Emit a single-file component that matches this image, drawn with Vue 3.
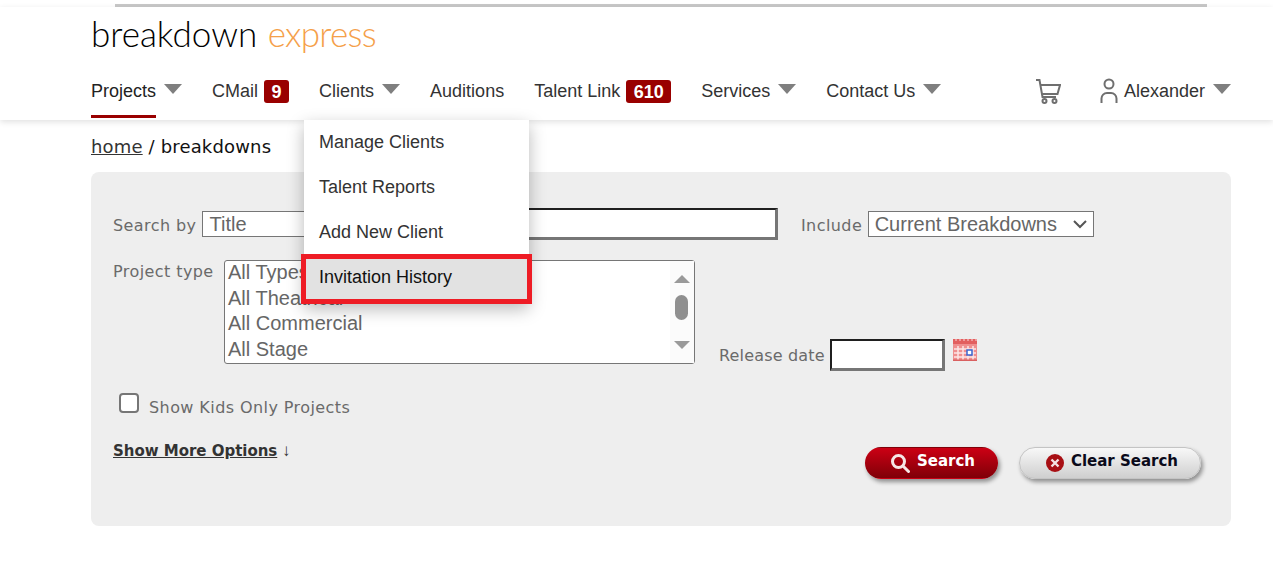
<script setup>
const navLeft = [
  { label: 'Projects', caret: true, active: true },
  { label: 'CMail', badge: '9' },
  { label: 'Clients', caret: true },
  { label: 'Auditions' },
  { label: 'Talent Link', badge: '610' },
  { label: 'Services', caret: true },
  { label: 'Contact Us', caret: true }
]
const menu = ['Manage Clients', 'Talent Reports', 'Add New Client', 'Invitation History']
const types = ['All Types', 'All Theatrical', 'All Commercial', 'All Stage']
</script>

<template>
  <div class="page">
    <div class="topline"></div>
    <header class="header">
      <div class="logo"><span class="logo-a">breakdown</span> <span class="logo-b">express</span></div>
      <nav class="nav">
        <div v-for="item in navLeft" :key="item.label" class="nav-item">
          <span class="nav-label" :class="{ active: item.active }">{{ item.label }}</span>
          <span v-if="item.badge" class="badge">{{ item.badge }}</span>
          <span v-if="item.caret" class="caret"></span>
          <ul v-if="item.label === 'Clients'" class="menu">
            <li v-for="m in menu" :key="m" class="menu-item" :class="{ hot: m === 'Invitation History' }">
              {{ m }}
              <span v-if="m === 'Invitation History'" class="callout"></span>
            </li>
          </ul>
        </div>
        <div class="nav-right">
          <svg class="cart" width="25" height="25" viewBox="0 0 25 25" fill="none" stroke="#6f6f6f" stroke-width="2">
            <path d="M0 1h3.500l3 17h13.500" />
            <path d="M4.500 6h19.500l-2.500 9H6" />
            <circle cx="8.500" cy="22" r="2" />
            <circle cx="18.500" cy="22" r="2" />
          </svg>
          <div class="user">
            <svg width="18" height="25" viewBox="0 0 18 25" fill="none" stroke="#6f6f6f" stroke-width="2">
              <circle cx="9" cy="6" r="4.500" />
              <path d="M1.500 25v-4.500a5.500 5.500 0 0 1 5.500-5.500h4a5.500 5.500 0 0 1 5.500 5.500v4.500" />
            </svg>
            <span class="nav-label">Alexander</span>
            <span class="caret"></span>
          </div>
        </div>
      </nav>
    </header>

    <div class="crumbs"><a class="crumb-link">home</a> / breakdowns</div>

    <section class="panel">
      <div class="row-search">
        <span class="label">Search by</span>
        <div class="select title-select">Title</div>
        <input class="text-input search-input" type="text" />
        <span class="label include">Include</span>
        <div class="select include-select">
          Current Breakdowns
          <svg class="chev" width="14" height="9" viewBox="0 0 14 9" fill="none" stroke="#555" stroke-width="2"><path d="M1 1l6 6 6-6" /></svg>
        </div>
      </div>

      <div class="row-type">
        <span class="label type-label">Project type</span>
        <div class="listbox">
          <div class="options">
            <div v-for="t in types" :key="t" class="option">{{ t }}</div>
          </div>
          <div class="scroll">
            <span class="arrow up"></span>
            <span class="thumb"></span>
            <span class="arrow down"></span>
          </div>
        </div>
        <div class="release">
          <span class="label release-label">Release date</span>
          <input class="text-input date-input" type="text" />
          <svg class="cal" width="24" height="22" viewBox="0 0 24 22">
            <rect x="0" y="0" width="24" height="22" fill="#ef8f8f" />
            <rect x="0" y="0" width="24" height="5" fill="#e25f5f" />
            <path d="M3 0v2M7 0v2M11 0v2M15 0v2M19 0v2M23 0v2" stroke="#fbd9d9" stroke-width="1" />
            <path d="M5 7v14M10 7v14M15 7v14M20 7v14M1 10h22M1 14h22M1 18h22" stroke="#fde6e6" stroke-width="1.500" />
            <rect x="0" y="20.500" width="24" height="1.500" fill="#d96060" />
            <rect x="14" y="11" width="5" height="5" fill="#fff" stroke="#3a66d0" stroke-width="1.500" />
          </svg>
        </div>
      </div>

      <label class="row-check">
        <span class="check"></span>
        <span class="label">Show Kids Only Projects</span>
      </label>

      <div class="row-actions">
        <div class="more"><a class="more-link">Show More Options</a> <span class="more-arrow">↓</span></div>
        <div class="buttons">
          <button class="btn btn-red">
            <svg width="20" height="20" viewBox="0 0 20 20" fill="none" stroke="#f6e6e6" stroke-width="3">
              <circle cx="8.500" cy="8.500" r="6" />
              <path d="M13 13l5.500 5.500" stroke-linecap="round" />
            </svg>
            Search
          </button>
          <button class="btn btn-light">
            <svg width="18" height="18" viewBox="0 0 18 18">
              <circle cx="9" cy="9" r="9" fill="#a80f14" />
              <path d="M5.500 5.500l7 7M12.500 5.500l-7 7" stroke="#f4e2e2" stroke-width="2.400" />
            </svg>
            Clear Search
          </button>
        </div>
      </div>
    </section>
  </div>
</template>

<style>
html, body { margin: 0; background: #fff; }
</style>

<style scoped>
.page {
  position: relative;
  height: 562px;
  overflow: hidden;
  background: #fff;
  font-family: "Liberation Sans", Arial, sans-serif;
}
.topline {
  height: 3px;
  margin: 4px 66px 0 115px;
  background: #c8c8c8;
}
.header {
  height: 113px;
  box-sizing: border-box;
  padding: 0 42px 0 91px;
  background: #fff;
  box-shadow: 0 2px 6px rgba(0, 0, 0, 0.12);
  position: relative;
  z-index: 2;
}
.logo {
  height: 60px;
  padding-top: 6px;
  box-sizing: border-box;
  font-family: Lato, sans-serif;
  font-weight: 300;
  font-size: 35px;
  line-height: 40px;
  white-space: nowrap;
}
.logo-a { color: #000; }
.logo-b { color: #f5a04a; margin-left: 1px; letter-spacing: -0.7px; }
.nav {
  display: flex;
  align-items: flex-start;
  gap: 30px;
  font-size: 18px;
  color: #333;
}
.nav-item {
  position: relative;
  display: flex;
  align-items: flex-start;
  height: 53px;
}
.nav-label {
  display: block;
  height: 48px;
  line-height: 49px;
  color: #333;
}
.nav-label.active {
  color: #222;
  border-bottom: 3px solid #900;
}
.caret {
  width: 0;
  height: 0;
  margin: 17px 0 0 8px;
  border-left: 9px solid transparent;
  border-right: 9px solid transparent;
  border-top: 10px solid #7f7f7f;
}
.badge {
  margin: 13px 0 0 6px;
  padding: 0 7.500px;
  height: 23px;
  line-height: 24px;
  background: #900;
  color: #fff;
  font-weight: 700;
  border-radius: 3px;
}
.menu {
  position: absolute;
  top: 53px;
  left: -15px;
  width: 225px;
  margin: 0;
  padding: 0 0 3px;
  list-style: none;
  background: #fff;
  box-shadow: 0 6px 16px rgba(0, 0, 0, 0.28);
}
.menu-item {
  position: relative;
  height: 45px;
  line-height: 44px;
  padding-left: 15px;
  color: #333;
}
.menu-item.hot {
  background: #e2e2e2;
  color: #111;
}
.callout {
  position: absolute;
  left: -3px;
  right: -3px;
  top: -1px;
  bottom: -4px;
  border: 5px solid #ee1c25;
}
.nav-right {
  margin-left: auto;
  display: flex;
  align-items: flex-start;
  gap: 39px;
}
.cart { margin-top: 12px; }
.user {
  display: flex;
  align-items: flex-start;
}
.user svg { margin: 11px 6px 0 0; }
.crumbs {
  margin: 16px 0 0 91px;
  height: 36px;
  font-family: "DejaVu Sans", sans-serif;
  font-size: 18px;
  letter-spacing: 0.16px;
  line-height: 22px;
  color: #111;
}
.crumb-link { color: #333; text-decoration: underline; }
.panel {
  margin: 0 42px 0 91px;
  height: 354px;
  box-sizing: border-box;
  padding: 36px 29px 0 22px;
  background: #eee;
  border-radius: 8px;
}
.label {
  font-family: "DejaVu Sans", sans-serif;
  font-size: 16px;
  letter-spacing: 0.42px;
  color: #6a6a6a;
  white-space: nowrap;
}
.row-search {
  display: flex;
  align-items: center;
  height: 32px;
}
.row-search .label { padding-top: 2px; }
.select {
  box-sizing: border-box;
  height: 26px;
  line-height: 25px;
  padding-left: 6px;
  border: 1px solid #767676;
  background: #fff;
  color: #666;
  font-size: 20px;
  position: relative;
}
.title-select {
  width: 118px;
  margin-left: 6px;
}
.text-input {
  box-sizing: border-box;
  border-style: solid;
  border-width: 2px 3px 3px 2px;
  border-color: #1f1f1f #767676 #767676 #1f1f1f;
  background: #fff;
  padding: 0;
  outline: none;
}
.search-input {
  margin-left: 10px;
  width: 448px;
  height: 32px;
}
.include { margin-left: 22.500px; }
.include-select {
  margin-left: 5.500px;
  width: 226px;
}
.chev {
  position: absolute;
  right: 6px;
  top: 8px;
}
.row-type {
  position: relative;
  display: flex;
  align-items: flex-start;
  margin-top: 20px;
}
.type-label {
  width: 111px;
  line-height: 24px;
  height: 24px;
}
.listbox {
  box-sizing: border-box;
  display: flex;
  width: 471px;
  height: 104px;
  background: #fff;
  border: 1px solid #767676;
  border-radius: 3px;
  color: #666;
  font-size: 20px;
}
.options {
  flex: 1;
  margin-top: -1px;
  padding: 0 0 0 3px;
}
.option {
  height: 25.700px;
  line-height: 25.700px;
}
.scroll {
  width: 23px;
  background: #fbfbfb;
  display: flex;
  flex-direction: column;
  align-items: center;
  padding-top: 14px;
  padding-right: 1px;
}
.arrow {
  width: 0;
  height: 0;
  border-left: 8px solid transparent;
  border-right: 8px solid transparent;
}
.arrow.up { border-bottom: 8px solid #9a9a9a; }
.arrow.down { border-top: 8px solid #9a9a9a; margin-top: 21px; }
.thumb {
  width: 13px;
  height: 25px;
  margin-top: 12px;
  border-radius: 7px;
  background: #8f8f8f;
}
.release {
  display: flex;
  align-items: flex-start;
  margin: 79px 0 0 24px;
}
.release-label {
  line-height: 34px;
  letter-spacing: 0.17px;
}
.date-input {
  width: 115px;
  height: 32px;
  margin-left: 5px;
}
.cal { margin-left: 8px; }
.row-check {
  display: flex;
  align-items: center;
  height: 24px;
  margin-top: 22px;
  padding-left: 6px;
}
.check {
  box-sizing: border-box;
  width: 20px;
  height: 20px;
  margin: 0 10px 9px 0;
  background: #fff;
  border: 2px solid #767676;
  border-radius: 4px;
}
.row-actions {
  display: flex;
  justify-content: space-between;
  align-items: flex-start;
  margin-top: 22px;
}
.more {
  font-family: "DejaVu Sans", sans-serif;
  font-size: 15px;
  line-height: 20px;
  color: #333;
}
.more-link {
  font-weight: 700;
  letter-spacing: -0.02px;
  text-decoration: underline;
}
.more-arrow {
  font-family: "Liberation Sans", sans-serif;
  font-size: 17px;
}
.buttons {
  display: flex;
  gap: 21px;
  margin-top: 6px;
  margin-right: 1px;
}
.btn {
  display: flex;
  align-items: center;
  justify-content: center;
  gap: 7px;
  height: 32px;
  padding: 0 0 4px;
  border-radius: 16px;
  border: 1px solid transparent;
  box-sizing: border-box;
  font-family: "DejaVu Sans", sans-serif;
  font-weight: 700;
  font-size: 15px;
  box-shadow: 2px 3px 4px rgba(0, 0, 0, 0.4);
}
.btn svg { margin-top: 4px; }
.btn-red {
  width: 133px;
  padding-left: 2px;
  color: #fff;
  background: linear-gradient(#cc0014, #7f0008);
}
.btn-light {
  width: 182px;
  padding-left: 4px;
  color: #0a0a1a;
  background: linear-gradient(#f8f8f8, #cfcfcf);
  border-color: #c4c4c4;
}
</style>
